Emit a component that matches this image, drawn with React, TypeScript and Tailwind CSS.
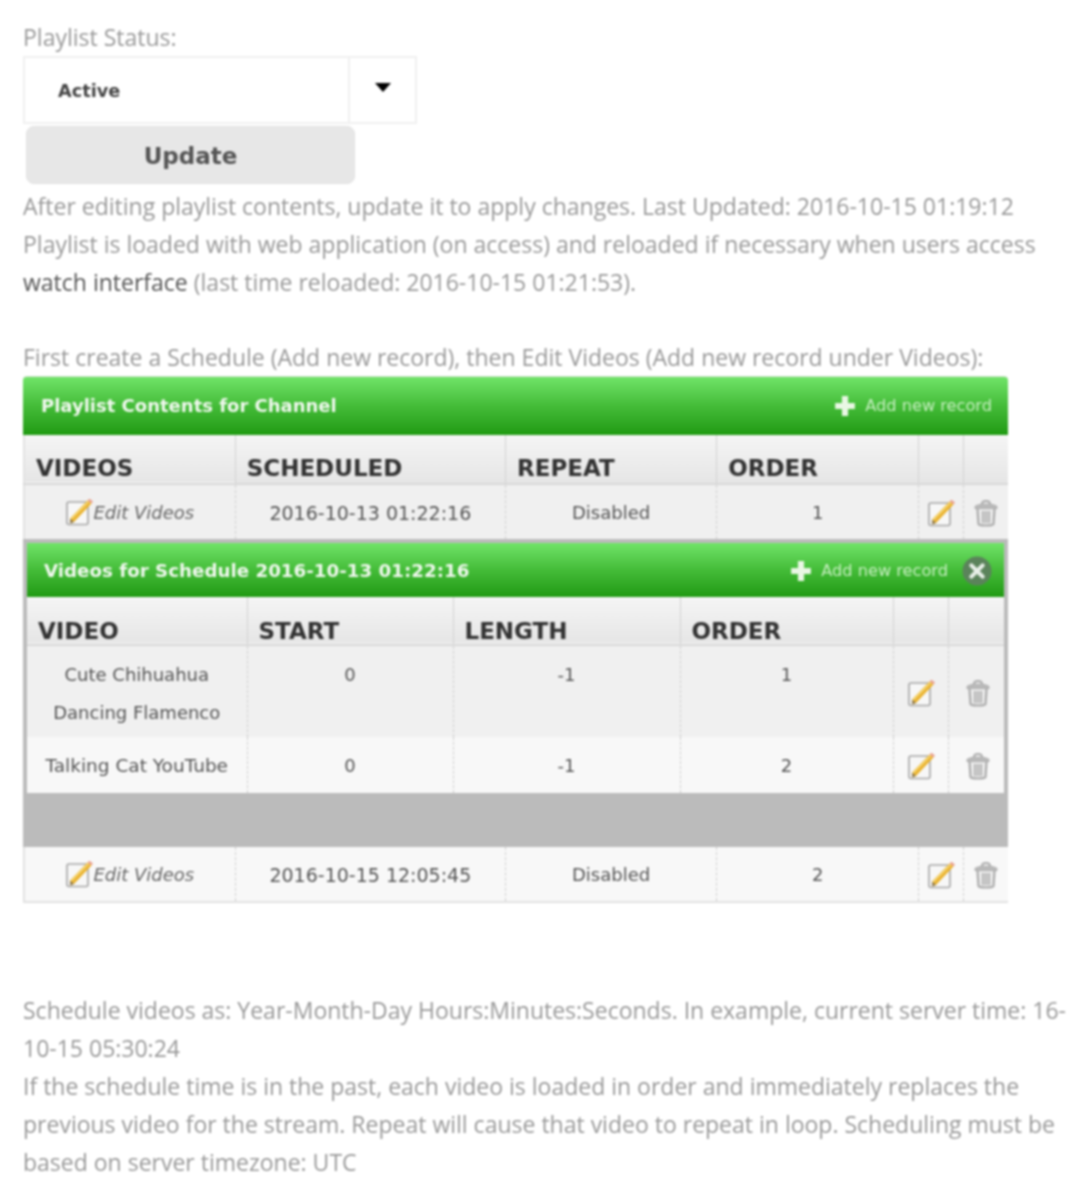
import React from "react";

const outerCols = [211, 270, 211, 202, 45, 44];
const innerCols = [220, 206, 227, 213, 55, 56];

function EditIcon({ className = "" }: { className?: string }) {
  return (
    <svg viewBox="0 0 28 28" className={className}>
      <rect x="2" y="4" width="21" height="22.5" rx="2" fill="#f7f7f7" stroke="#a6a6a6" strokeWidth="1.6" />
      <path d="M5 20.5 L22.5 2.5 L26.5 5.5 L9 24 L5 25.5 Z" fill="#eab433" />
      <path d="M6 21 L23.5 3.5" stroke="#f8dc7c" strokeWidth="1.4" />
      <path d="M22.5 2.5 L24.5 0.8 L28 3.6 L26.5 5.5 Z" fill="#e9a08e" />
      <path d="M5 25.5 L5 20.5 L9 24 Z" fill="#8c7a55" />
    </svg>
  );
}

function TrashIcon({ className = "" }: { className?: string }) {
  return (
    <svg viewBox="0 0 24 28" fill="none" stroke="#ababab" className={className}>
      <path d="M1 7.5 C3 4.5 21 4.5 23 7.5 L23 9.5 L1 9.5 Z" fill="#bbbbbb" strokeWidth="1" />
      <path d="M8 5 C8 1 16 1 16 5" strokeWidth="2" />
      <path d="M3.5 10 L4.5 25 C4.5 27 19.5 27 19.5 25 L20.5 10" fill="#ececec" strokeWidth="2.2" />
      <path d="M9 12 V24 M12 12 V24 M15 12 V24" strokeWidth="1.8" />
    </svg>
  );
}

function PlusIcon() {
  return (
    <svg viewBox="0 0 20 20" className="h-[22px] w-[22px] shrink-0" fill="#e9f7e4">
      <path d="M7.2 1 h5.6 v6.2 h6.2 v5.6 h-6.2 v6.2 h-5.6 v-6.2 h-6.2 v-5.6 h6.2 Z" />
    </svg>
  );
}

function CloseIcon() {
  return (
    <svg viewBox="0 0 32 32" className="h-[30px] w-[30px] shrink-0">
      <circle cx="16" cy="16" r="15.5" fill="#5b835b" />
      <path d="M10 10 L22 22 M22 10 L10 22" stroke="#e8efe8" strokeWidth="4.5" strokeLinecap="round" />
    </svg>
  );
}

function PanelHeader({ title, inner }: { title: string; inner?: boolean }) {
  return (
    <div
      className={`flex items-center justify-between bg-gradient-to-b from-[#70e468] via-[#44bc38] to-[#1f9a10] text-[#f0f8ee] ${
        inner ? "h-[54px] pl-[17px] pr-[12px] pt-[1px]" : "h-[59px] rounded-t-[4px] border-t border-[#cfe0cc] pl-[18px] pr-[16px]"
      }`}
    >
      <span className={inner ? "text-[18.25px] font-bold" : "text-[18px] font-bold"}>{title}</span>
      <div className="flex items-center">
        <PlusIcon />
        <span className="ml-[9px] text-[16.2px] text-[#c6eec0]">Add new record</span>
        {inner && (
          <span className="ml-[14px]">
            <CloseIcon />
          </span>
        )}
      </div>
    </div>
  );
}

function HeadRow({ labels, inner }: { labels: string[]; inner?: boolean }) {
  return (
    <tr
      className={`border-b-2 border-[#d8d8d8] bg-gradient-to-b from-[#f5f5f5] to-[#e6e6e6] ${
        inner ? "h-[48px]" : "h-[49px]"
      }`}
    >
      {labels.map((label, i) => (
        <th
          key={i}
          className={`border-r border-[#d2d2d2] px-[11px] text-left align-middle text-[23px] font-bold leading-[26px] text-[#333] last:border-r-0 ${
            inner ? "pt-[21px]" : "pt-[17px]"
          }`}
        >
          {label}
        </th>
      ))}
    </tr>
  );
}

function Actions({ nested }: { nested?: boolean }) {
  return (
    <>
      <td className="border-r border-dashed border-[#cfcfcf] pt-[2px] text-center">
        <EditIcon className="mx-auto h-[28px] w-[28px]" />
      </td>
      <td className={nested ? "pl-[4px] pt-[2px] text-center" : "pt-[2px] text-center"}>
        <TrashIcon className="mx-auto h-[28px] w-[24px]" />
      </td>
    </>
  );
}

const cell = "border-r border-dashed border-[#cfcfcf] text-center text-[#555]";

function ScheduleRow({ date, order, bg }: { date: string; order: number; bg: string }) {
  return (
    <tr className={`h-[55px] ${bg}`}>
      <td className={cell}>
        <span className="flex items-center justify-center">
          <EditIcon className="h-[28px] w-[28px]" />
          <em className="pt-[2px] text-[#666]">Edit Videos</em>
        </span>
      </td>
      <td className={`${cell} pt-[2px] text-[19px]`}>{date}</td>
      <td className={`${cell} pt-[2px]`}>Disabled</td>
      <td className={`${cell} pt-[2px]`}>{order}</td>
      <Actions />
    </tr>
  );
}

export default function App() {
  return (
    <div className="blur-[0.9px] bg-white pl-[23px] pt-[18px] font-['Open_Sans',sans-serif] text-[23px] leading-[38px] text-[#999] w-[1092px] h-[1200px] overflow-hidden">
      <div>Playlist Status:</div>
      <div className="flex h-[68px] w-[394px] border-2 border-[#f0f0f0]">
        <div className="flex flex-1 items-center pl-[33px] pt-[2px] font-['DejaVu_Sans',sans-serif] text-[17.7px] font-bold text-[#444]">
          Active
        </div>
        <div className="flex w-[67px] justify-center border-l-2 border-[#f0f0f0] pt-[25px]">
          <div className="h-0 w-0 border-x-[8px] border-t-[9px] border-x-transparent border-t-black" />
        </div>
      </div>
      <button className="ml-[3px] mt-[2px] block h-[58px] w-[329px] rounded-[8px] border border-[#e2e2e2] bg-[#e7e7e7] pt-[2px] font-['DejaVu_Sans',sans-serif] text-[23px] font-bold text-[#555]">
        Update
      </button>
      <div className="w-[1045px] pt-[3px]">
        <p>After editing playlist contents, update it to apply changes. Last Updated: 2016-10-15 01:19:12</p>
        <p>Playlist is loaded with web application (on access) and reloaded if necessary when users access</p>
        <p>
          <span className="text-[#555]">watch interface</span> (last time reloaded: 2016-10-15 01:21:53).
        </p>
        <p className="mt-[37px]">First create a Schedule (Add new record), then Edit Videos (Add new record under Videos):</p>
      </div>

      <div className="w-[985px] font-['DejaVu_Sans',sans-serif] text-[18px] leading-[38px]">
        <PanelHeader title="Playlist Contents for Channel" />
        <table className="w-[985px] table-fixed border-collapse border-l-2 border-[#e2e2e2]">
          <colgroup>
            {outerCols.map((w, i) => (
              <col key={i} style={{ width: w }} />
            ))}
          </colgroup>
          <thead>
            <HeadRow labels={["VIDEOS", "SCHEDULED", "REPEAT", "ORDER", "", ""]} />
          </thead>
          <tbody>
            <ScheduleRow date="2016-10-13 01:22:16" order={1} bg="bg-[#f0f0f0]" />
          </tbody>
        </table>

        <div className="border-x-4 border-t-4 border-b-[54px] border-[#bbbbbb]">
          <PanelHeader title="Videos for Schedule 2016-10-13 01:22:16" inner />
          <table className="w-full table-fixed border-collapse">
            <colgroup>
              {innerCols.map((w, i) => (
                <col key={i} style={{ width: w }} />
              ))}
            </colgroup>
            <thead>
              <HeadRow labels={["VIDEO", "START", "LENGTH", "ORDER", "", ""]} inner />
            </thead>
            <tbody>
              <tr className="h-[92px] bg-[#f0f0f0]">
                <td className={`${cell} pt-[10px] align-top`}>Cute Chihuahua Dancing Flamenco</td>
                <td className={`${cell} pt-[10px] align-top`}>0</td>
                <td className={`${cell} pt-[10px] align-top`}>-1</td>
                <td className={`${cell} pt-[10px] align-top`}>1</td>
                <Actions nested />
              </tr>
              <tr className="h-[56px] bg-[#f8f8f8]">
                <td className={`${cell} pt-[2px] text-[18.5px]`}>Talking Cat YouTube</td>
                <td className={`${cell} pt-[2px]`}>0</td>
                <td className={`${cell} pt-[2px]`}>-1</td>
                <td className={`${cell} pt-[2px]`}>2</td>
                <Actions nested />
              </tr>
            </tbody>
          </table>
        </div>

        <table className="w-[985px] table-fixed border-collapse border-b-2 border-l-2 border-[#e2e2e2]">
          <colgroup>
            {outerCols.map((w, i) => (
              <col key={i} style={{ width: w }} />
            ))}
          </colgroup>
          <tbody>
            <ScheduleRow date="2016-10-15 12:05:45" order={2} bg="bg-[#f8f8f8]" />
          </tbody>
        </table>
      </div>

      <div className="mt-[88px] w-[1045px]">
        <p>Schedule videos as: Year-Month-Day Hours:Minutes:Seconds. In example, current server time: 16-10-15 05:30:24</p>
        <p>
          If the schedule time is in the past, each video is loaded in order and immediately replaces the previous video
          for the stream. Repeat will cause that video to repeat in loop. Scheduling must be based on server timezone: UTC
        </p>
      </div>
    </div>
  );
}
